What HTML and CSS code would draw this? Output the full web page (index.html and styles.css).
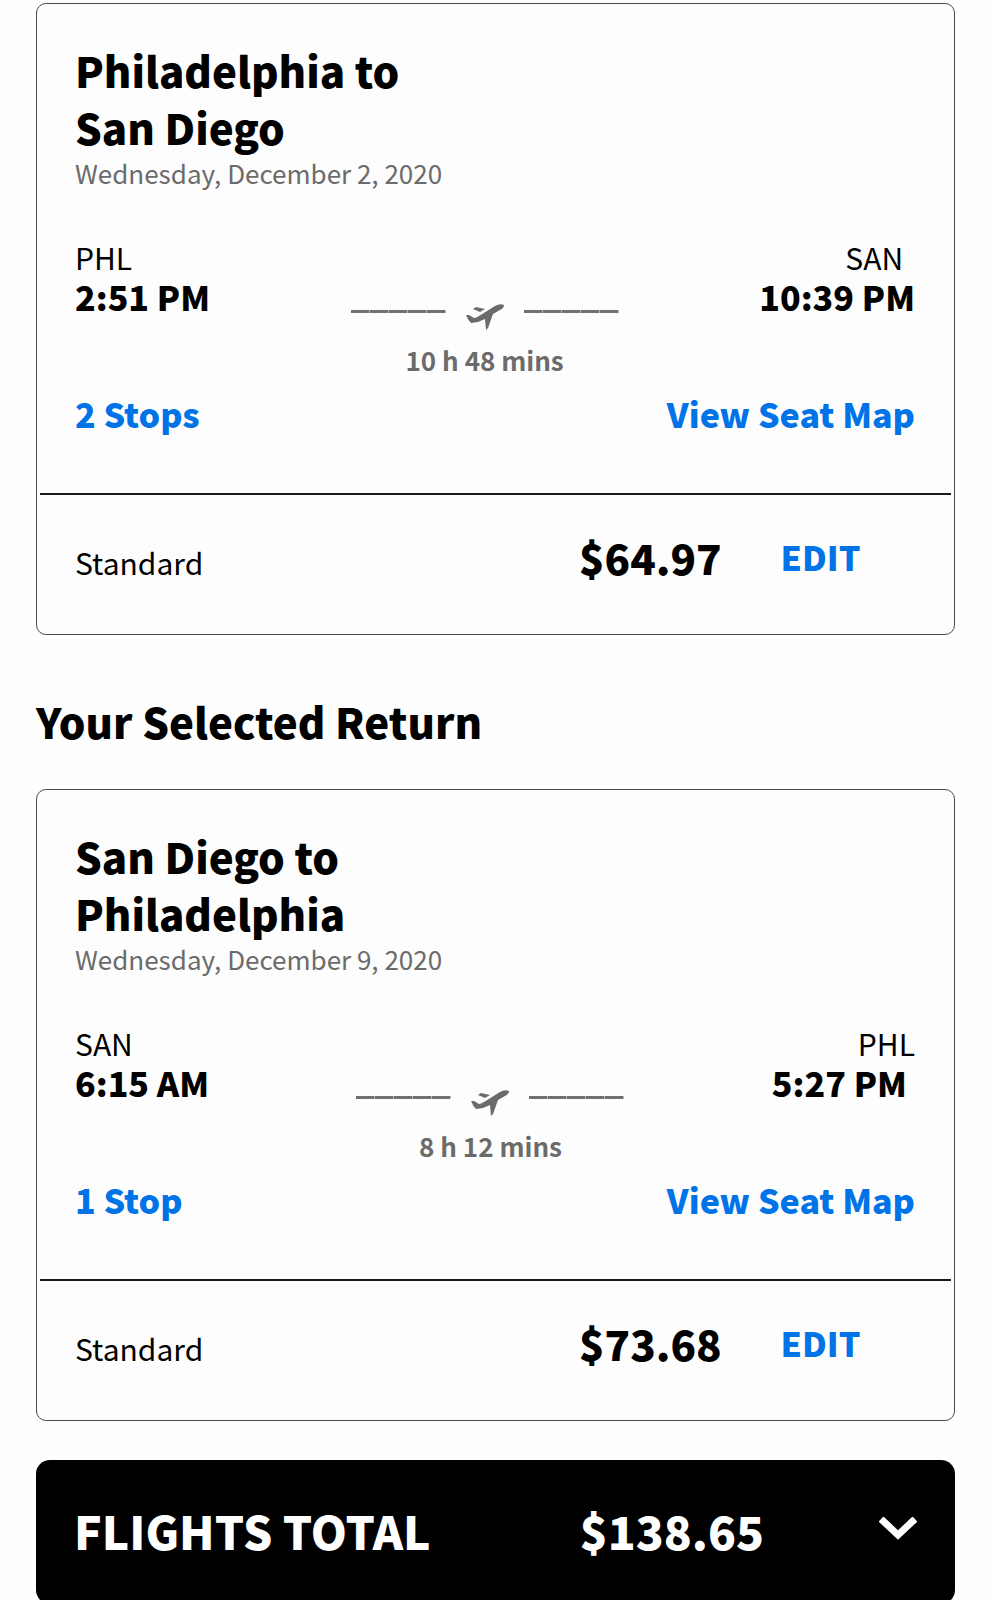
FILE: index.html
```html
<!DOCTYPE html>
<html lang="en">
<head>
    <meta charset="UTF-8">
    <meta name="viewport" content="width=device-width, initial-scale=1.0">
    <title>Your Flights</title>
    <link rel="stylesheet" href="styles.css">
</head>
<body>
    <main class="trip">
        <section class="card">
            <div class="details">
                <h2 class="route">Philadelphia to<br>San Diego</h2>
                <p class="date">Wednesday, December 2, 2020</p>
                <div class="leg">
                    <div class="depart">
                        <p class="code">PHL</p>
                        <p class="time">2:51 PM</p>
                    </div>
                    <div class="flight">
                        <div class="path">
                            <span class="dashes"></span>
                            <svg class="plane" viewBox="0 0 38 26" aria-hidden="true">
                                <path d="M0 11 L3 11 L8 14 Q10 14 13 12 L29 2 Q34 -1 38 1 Q38 4 34 6 L27 10 L22 24 L20 26 L19 15 L12 18 L5 19 Q2 16 0 11 Z"/>
                                <path d="M7 5 L10 3 L19 5 L14 8 Z"/>
                            </svg>
                            <span class="dashes"></span>
                        </div>
                        <p class="duration">10 h 48 mins</p>
                    </div>
                    <div class="arrive">
                        <p class="code">SAN</p>
                        <p class="time">10:39 PM</p>
                    </div>
                </div>
                <div class="links">
                    <a href="#">2 Stops</a>
                    <a href="#">View Seat Map</a>
                </div>
            </div>
            <div class="fare">
                <span class="fare-type">Standard</span>
                <div class="fare-price">
                    <span class="price">$64.97</span>
                    <button class="edit">EDIT</button>
                </div>
            </div>
        </section>

        <h2 class="heading">Your Selected Return</h2>

        <section class="card">
            <div class="details">
                <h2 class="route">San Diego to<br>Philadelphia</h2>
                <p class="date">Wednesday, December 9, 2020</p>
                <div class="leg">
                    <div class="depart">
                        <p class="code">SAN</p>
                        <p class="time">6:15 AM</p>
                    </div>
                    <div class="flight">
                        <div class="path">
                            <span class="dashes"></span>
                            <svg class="plane" viewBox="0 0 38 26" aria-hidden="true">
                                <path d="M0 11 L3 11 L8 14 Q10 14 13 12 L29 2 Q34 -1 38 1 Q38 4 34 6 L27 10 L22 24 L20 26 L19 15 L12 18 L5 19 Q2 16 0 11 Z"/>
                                <path d="M7 5 L10 3 L19 5 L14 8 Z"/>
                            </svg>
                            <span class="dashes"></span>
                        </div>
                        <p class="duration">8 h 12 mins</p>
                    </div>
                    <div class="arrive">
                        <p class="code">PHL</p>
                        <p class="time">5:27 PM</p>
                    </div>
                </div>
                <div class="links">
                    <a href="#">1 Stop</a>
                    <a href="#">View Seat Map</a>
                </div>
            </div>
            <div class="fare">
                <span class="fare-type">Standard</span>
                <div class="fare-price">
                    <span class="price">$73.68</span>
                    <button class="edit">EDIT</button>
                </div>
            </div>
        </section>

        <button class="total">
            <span>FLIGHTS TOTAL</span>
            <span class="total-price">
                $138.65
                <svg class="chevron" viewBox="0 0 38 23" aria-hidden="true">
                    <path d="M2 2 L19 18 L36 2"/>
                </svg>
            </span>
        </button>
    </main>
</body>
</html>
```
FILE: styles.css
```css
* {
    box-sizing: border-box;
}

body {
    margin: 0;
    background-color: #fefefe;
    color: #000;
    font-family: "Noto Sans CJK SC", "Open Sans", sans-serif;
}

h2, p {
    margin: 0;
}

button {
    border: none;
    background: none;
    padding: 0;
    font-family: inherit;
    cursor: pointer;
}

.trip {
    padding: 3px 36px 0;
}

.card {
    background-color: #fdfdfd;
    border: 1px solid #4a4a4a;
    border-radius: 10px;
}

.details {
    padding: 37px 39px 59px 38px;
}

.route, .heading, .price {
    font-size: 42px;
    font-weight: 900;
    line-height: 57px;
}

.heading {
    margin: 57px 0 40px;
}

.date {
    color: #6b6b6b;
    font-size: 26px;
    line-height: 36px;
}

.leg {
    display: flex;
    justify-content: space-between;
    margin-top: 46px;
}

.code, .fare-type {
    font-size: 30px;
    line-height: 40px;
}

.arrive .code {
    margin-left: 86px;
}

.time {
    font-size: 34px;
    font-weight: 900;
    line-height: 40px;
}

.flight {
    color: #6b6b6b;
    padding-top: 67px;
    text-align: center;
}

.path {
    display: flex;
    align-items: flex-start;
    gap: 20px;
}

.dashes {
    width: 95px;
    height: 3px;
    margin-top: 6px;
    background: repeating-linear-gradient(to right, #707070 0 18px, #b8b8b8 18px 19px);
}

.plane {
    width: 38px;
    height: 26px;
    fill: #6b6b6b;
}

.duration {
    margin-top: 12px;
    font-size: 26px;
    font-weight: 700;
    line-height: 36px;
}

.links {
    display: flex;
    justify-content: space-between;
    margin-top: 16px;
}

.links a, .edit {
    color: #0073e6;
    font-size: 34px;
    font-weight: 900;
    line-height: 40px;
    text-decoration: none;
}

.fare {
    display: grid;
    grid-template-columns: 3fr 2fr;
    align-items: baseline;
    margin: 0 3px;
    padding: 33px 36px 49px 35px;
    border-top: 2px solid #1a1a1a;
}

.fare-price {
    display: flex;
    align-items: center;
}

.price {
    flex: 0 0 60%;
}

.total {
    display: grid;
    grid-template-columns: 3fr 2fr;
    width: 100%;
    margin-top: 39px;
    padding: 38px 38px 42px;
    border-radius: 14px;
    background-color: #000;
    color: #fff;
    font-size: 46px;
    font-weight: 900;
    line-height: 64px;
    text-align: left;
}

.total-price {
    display: flex;
    justify-content: space-between;
    align-items: center;
}

.chevron {
    width: 38px;
    height: 23px;
    margin-bottom: 4px;
    fill: none;
    stroke: #fff;
    stroke-width: 7;
}
```
